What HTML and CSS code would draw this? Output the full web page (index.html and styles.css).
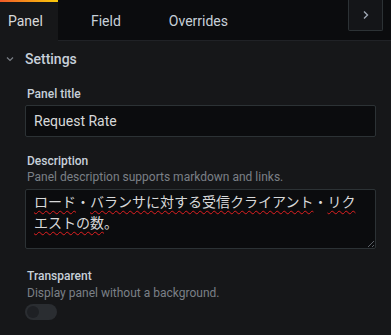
FILE: index.html
```html
<!DOCTYPE html>
<html lang="ja">
<head>
    <meta charset="UTF-8">
    <meta name="viewport" content="width=device-width, initial-scale=1.0">
    <title>Panel editor</title>
    <link rel="stylesheet" href="styles.css">
</head>
<body>
    <div class="tabs">
        <div class="tab active">Panel</div>
        <div class="tab">Field</div>
        <div class="tab">Overrides</div>
        <button class="collapse-btn">
            <svg width="8" height="10" viewBox="0 0 8 10"><path d="M2 1.5 L5.5 5 L2 8.5" fill="none" stroke="#9fa7b3" stroke-width="1.4"/></svg>
        </button>
    </div>

    <div class="section-header">
        <svg class="chevron" width="10" height="8" viewBox="0 0 10 8"><path d="M2 2.5 L5 5.5 L8 2.5" fill="none" stroke="#7b8087" stroke-width="1.2"/></svg>
        <span>Settings</span>
    </div>

    <div class="section-body">
        <div class="field">
            <div class="label">Panel title</div>
            <div class="input">Request Rate</div>
        </div>

        <div class="field field-wide">
            <div class="label">Description</div>
            <div class="help">Panel description supports markdown and links.</div>
            <div class="textarea"><span class="typo">ロード</span>・<span class="typo">バランサに対する受信クライアント</span>・<span class="typo">リクエストの数</span>。</div>
        </div>

        <div class="field">
            <div class="label">Transparent</div>
            <div class="help help-tight">Display panel without a background.</div>
            <div class="switch"><div class="knob"></div></div>
        </div>
    </div>
</body>
</html>
```

FILE: styles.css
```css
body {
    margin: 0;
    background-color: #161719;
    font-family: Roboto, "Noto Sans CJK JP", sans-serif;
    color: #d8d9da;
    width: 391px;
    height: 335px;
    overflow: hidden;
}
.tabs {
    display: flex;
    gap: 25px;
    height: 40px;
    background-color: #0b0c0e;
    border-bottom: 1px solid #202226;
}
.tab {
    padding: 10px 15px 0 8px;
    font-size: 14px;
    line-height: 22px;
    color: #c7d0d9;
}
.tab.active {
    margin-bottom: -1px;
    background: linear-gradient(90deg, #f05a28, #fbca0a) top / 100% 2px no-repeat, #161719;
    color: #d8d9da;
}
.collapse-btn {
    margin-left: auto;
    margin-right: 8px;
    width: 35px;
    height: 31px;
    align-self: flex-start;
    background-color: #141518;
    border: 1px solid #2c3235;
    border-top: none;
    border-radius: 0 0 2px 2px;
    padding: 0;
    display: flex;
    align-items: center;
    justify-content: center;
}
.section-header {
    display: flex;
    align-items: center;
    height: 36px;
    padding-left: 5px;
    font-size: 14px;
    font-weight: 500;
    color: #c7d0d9;
}
.chevron {
    margin-right: 10px;
}
.section-body {
    padding: 9px 15px 0 25px;
}
.field {
    margin-bottom: 16px;
}
.field-wide {
    margin-bottom: 19px;
}
.label {
    padding-left: 2px;
    font-size: 12px;
    font-weight: 500;
    line-height: 16px;
    color: #c7d0d9;
    margin-bottom: 3px;
}
.help {
    padding-left: 2px;
    font-size: 12px;
    line-height: 16px;
    color: #7b8087;
    margin-top: -3px;
    margin-bottom: 4px;
}
.help-tight {
    margin-top: -2px;
    margin-bottom: 3px;
}
.input {
    box-sizing: border-box;
    height: 32px;
    padding: 0 8px;
    background-color: #0b0c0e;
    border: 1px solid #2c3235;
    border-radius: 2px;
    font-size: 14px;
    line-height: 30px;
}
.textarea {
    position: relative;
    box-sizing: border-box;
    height: 60px;
    padding: 2px 8px;
    background-color: #0b0c0e;
    border: 1px solid #2c3235;
    border-radius: 2px;
    font-size: 14px;
    line-height: 21px;
}
.textarea::after {
    content: "";
    position: absolute;
    right: 1px;
    bottom: 1px;
    width: 9px;
    height: 9px;
    background: repeating-linear-gradient(135deg, transparent 0 2px, #5a5f66 2px 3px);
    clip-path: polygon(100% 0, 100% 100%, 0 100%);
}
.typo {
    text-decoration: underline wavy #e02020;
    text-decoration-thickness: 1px;
    text-underline-offset: 3px;
}
.switch {
    width: 32px;
    height: 16px;
    border-radius: 8px;
    background-color: #2a2d31;
    position: relative;
}
.knob {
    position: absolute;
    left: 2px;
    top: 2px;
    width: 12px;
    height: 12px;
    border-radius: 50%;
    background-color: #1e2024;
}
```
